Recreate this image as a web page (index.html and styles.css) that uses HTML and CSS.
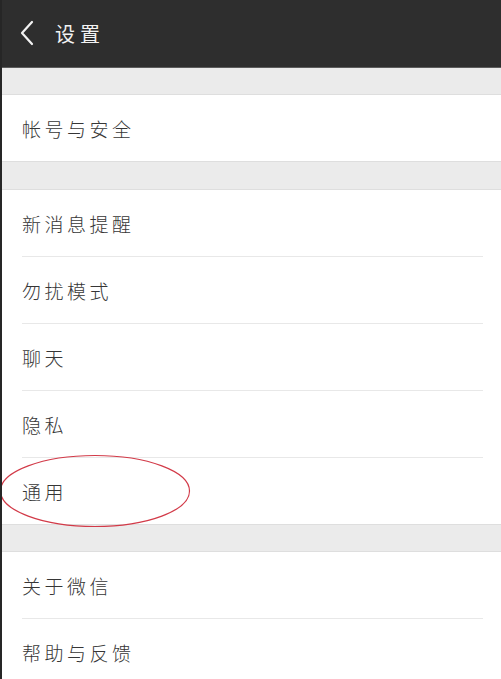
FILE: index.html
```html
<!doctype html>
<html lang="zh-CN">
	<head>
		<meta charset="utf-8">
		<meta name="viewport" content="width=device-width, initial-scale=1.0">
		<title>设置</title>
		<link rel="stylesheet" href="styles.css">
	</head>
  <body>
    <header class="topbar">
      <svg class="back" width="16" height="26" viewBox="0 0 16 26">
        <path d="M13 2 L3 13 L13 24" fill="none" stroke="#f2f2f2" stroke-width="2.2" stroke-linecap="round" stroke-linejoin="round"/>
      </svg>
      <h1 class="title">设置</h1>
    </header>

    <main class="settings">
      <div class="gap"></div>
      <div class="group">
        <div class="item">帐号与安全</div>
      </div>

      <div class="gap"></div>
      <div class="group">
        <div class="item">新消息提醒</div>
        <div class="item">勿扰模式</div>
        <div class="item">聊天</div>
        <div class="item">隐私</div>
        <div class="item item-marked">
          通用
          <svg class="mark" width="194" height="76" viewBox="0 0 194 76">
            <ellipse cx="97" cy="38" rx="94.5" ry="35.5" fill="none" stroke="#d23a48" stroke-width="1.2"/>
          </svg>
        </div>
      </div>

      <div class="gap gap-last"></div>
      <div class="group">
        <div class="item">关于微信</div>
        <div class="item">帮助与反馈</div>
      </div>
    </main>
  </body>
</html>
```

FILE: styles.css
```css
* { box-sizing: border-box; }

:root {
	--font-family: "Noto Sans CJK SC", "Noto Sans", sans-serif;
	--bar-color: #2e2e2e;
	--gap-color: #ebebeb;
	--gap-line: #dedede;
	--divider: #e8e8e8;
	--text-color: #363636;
}

html,
body {
	margin: 0;
	padding: 0;
	height: 100%;
	overflow: hidden;
	background-color: #fff;
	font-family: var(--font-family);
}

body {
	border-left: 2px solid #262626;
}

/* Top bar */
.topbar {
	height: 68px;
	background-color: var(--bar-color);
	border-bottom: 1px solid #5c5c5c;
	display: flex;
	align-items: center;
	padding-left: 17px;
}
.back {
	display: block;
	margin-top: -2px;
}
.title {
	margin: 0 0 0 20px;
	font-size: 20px;
	font-weight: 400;
	letter-spacing: 5px;
	color: #f2f2f2;
}

/* List */
.gap {
	height: 29px;
	background-color: var(--gap-color);
	border-top: 1px solid var(--gap-line);
	border-bottom: 1px solid var(--gap-line);
}
.settings > .gap:first-child {
	border-top: none;
	height: 27px;
}
.gap-last {
	height: 28px;
}

.group {
	background-color: #fff;
}
.item {
	position: relative;
	height: 66px;
	margin: 0 18px 0 20px;
	display: flex;
	align-items: center;
	font-size: 19px;
	font-weight: 300;
	letter-spacing: 3.5px;
	color: var(--text-color);
}
.item + .item {
	height: 67px;
	border-top: 1px solid var(--divider);
}

/* red hand-drawn circle over "通用" */
.mark {
	position: absolute;
	left: -24px;
	top: -5px;
	pointer-events: none;
}
```
